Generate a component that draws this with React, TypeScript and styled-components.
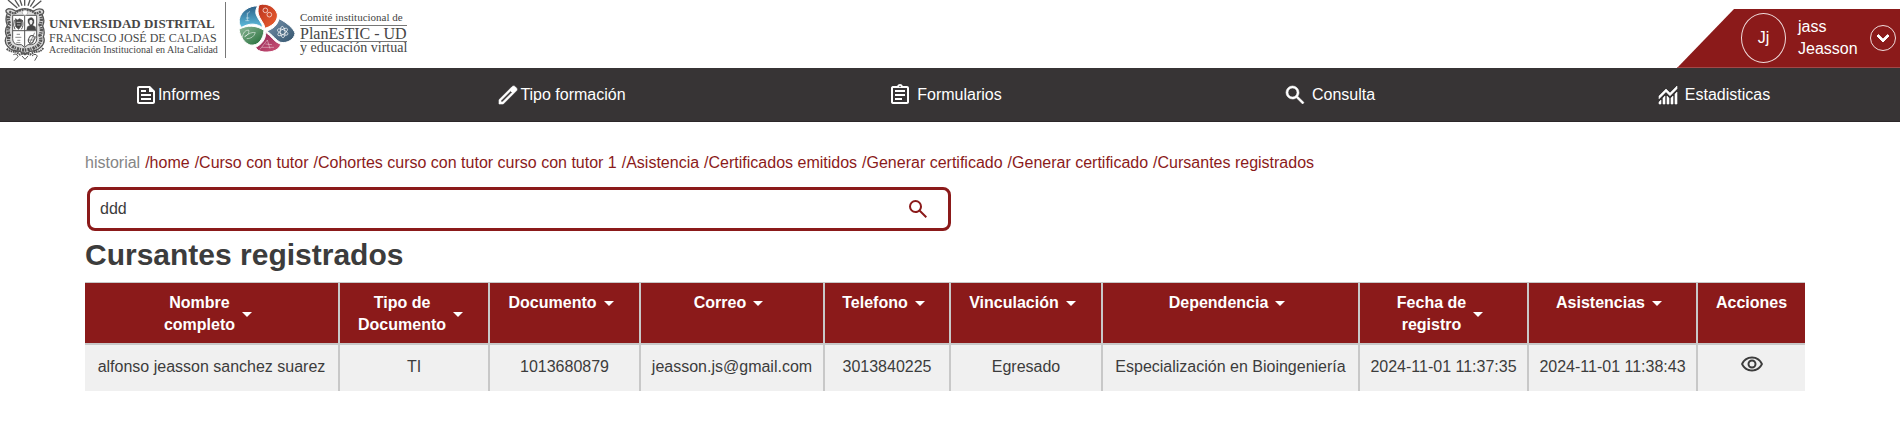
import React from "react";
import styled, { createGlobalStyle } from "styled-components";
import {
  MdArrowDropDown,
  MdKeyboardArrowDown,
  MdOutlineAssignment,
  MdOutlineFeed,
  MdOutlineRemoveRedEye,
} from "react-icons/md";

const red = "#8b1a1a";
const dark = "#373435";
const line = "#c8c8c8";

const GlobalStyle = createGlobalStyle`
  *, *::before, *::after { box-sizing: border-box; }
  body {
    margin: 0;
    background: #fff;
    color: #3c3c3c;
    font: 16px/22px "Liberation Sans", Arial, sans-serif;
  }
  button, input { font: inherit; color: inherit; }
  svg { display: block; flex: none; }
`;

const Header = styled.header`
  display: flex;
  justify-content: space-between;
  align-items: flex-end;
  height: 68px;
`;

const Brand = styled.a`
  display: flex;
  align-items: flex-start;
  align-self: stretch;
  padding-left: 4px;
  color: #464646;
  text-decoration: none;
  font-family: "Liberation Serif", "Times New Roman", serif;
  white-space: nowrap;
`;

const University = styled.span`
  display: flex;
  flex-direction: column;
  width: 176px;
  margin: 16px 0 0 3px;
`;

const BrandLine = styled.span<{ $size: number; $height: number; $bold?: boolean }>`
  font-size: ${(p) => p.$size}px;
  line-height: ${(p) => p.$height}px;
  font-weight: ${(p) => (p.$bold ? 700 : 400)};
`;

const Divider = styled.span`
  width: 1px;
  height: 56px;
  margin: 2px 12px 0 0;
  background: #777;
`;

const Committee = styled.span`
  display: flex;
  flex-direction: column;
  margin: 11px 0 0 4px;
`;

const Plan = styled(BrandLine)`
  border: solid #777;
  border-width: 1px 0;
  margin-top: 1px;
`;

const User = styled.div`
  display: flex;
  align-items: center;
  height: 59px;
  padding: 0 4px 0 64px;
  background: ${red};
  border-bottom: 1px solid #a34848;
  clip-path: polygon(57px 0, 100% 0, 100% 100%, 0 100%);
  color: #fff;
`;

const Avatar = styled.span`
  display: flex;
  align-items: center;
  justify-content: center;
  width: 45px;
  height: 50px;
  border: 1px solid #f0dcdc;
  border-radius: 50%;
`;

const UserName = styled.span`
  width: 72px;
  margin-left: 12px;
`;

const RoundButton = styled.button`
  width: 26px;
  height: 26px;
  padding: 0;
  border: 1px solid #f0dcdc;
  border-radius: 50%;
  background: none;
  color: #fff;
  path:not([fill="none"]) { stroke: currentColor; stroke-width: 1px; }
`;

const Nav = styled.nav`
  display: grid;
  grid-template-columns: repeat(5, 1fr);
  gap: 30px;
  height: 54px;
  padding-right: 10px;
  background: ${dark};
  border-bottom: 1px solid #2b2729;
`;

const NavLink = styled.a<{ $gap: number }>`
  display: flex;
  align-items: center;
  justify-content: center;
  gap: ${(p) => p.$gap}px;
  color: #fff;
  text-decoration: none;
`;

const Main = styled.main`
  padding: 30px 95px 32px 85px;
`;

const Crumbs = styled.nav`
  display: flex;
  flex-wrap: wrap;
  gap: 5px;
  color: #858585;
`;

const Crumb = styled.a`
  color: ${red};
  text-decoration: none;
`;

const Search = styled.form`
  display: flex;
  align-items: center;
  width: calc(50% + 4px);
  height: 44px;
  margin: 13px 0 0 2px;
  padding: 0 18px 0 10px;
  border: 3px solid ${red};
  border-radius: 8px;
`;

const SearchInput = styled.input`
  flex: 1;
  min-width: 0;
  padding: 0;
  border: 0;
  outline: 0;
  background: none;
`;

const IconButton = styled.button`
  display: inline-flex;
  padding: 0;
  border: 0;
  background: none;
  color: inherit;
  vertical-align: top;
`;

const SearchButton = styled(IconButton)`
  color: ${red};
`;

const Title = styled.h1`
  margin: 7px 0 11px;
  font-size: 30px;
  line-height: 33px;
`;

const Table = styled.table`
  width: 100%;
  table-layout: fixed;
  border-collapse: separate;
  border-spacing: 0;
  border-top: 1px solid ${line};
  text-align: center;
`;

const Head = styled.th`
  padding: 9px 0 7px;
  background: ${red};
  color: #fff;
  vertical-align: top;
  border-right: 2px solid ${line};
  border-bottom: 2px solid ${line};
  &:last-child { border-right: 0; }
`;

const SortButton = styled.button`
  display: inline-flex;
  align-items: center;
  padding: 0;
  border: 0;
  background: none;
  vertical-align: top;
  svg { margin: -1px 0; }
`;

const Cell = styled.td`
  height: 46px;
  padding: 11px 0 13px;
  background: #f0f0f0;
  vertical-align: top;
  white-space: nowrap;
  border-right: 2px solid ${line};
  &:last-child { border-right: 0; padding: 7px 0 0; }
`;

const Symbol = ({ d, bold }: { d: string; bold?: boolean }) => (
  <svg width="24" height="24" viewBox="0 -960 960 960" fill="currentColor"
    stroke="currentColor" strokeWidth={bold ? 24 : 0} aria-hidden="true">
    <path d={d} />
  </svg>
);

const searchPath =
  "M784-120 532-372q-30 24-69 38t-83 14q-109 0-184.5-75.5T120-580q0-109 75.5-184.5T380-840q109 0 184.5 75.5T640-580q0 44-14 83t-38 69l252 252-56 56ZM380-400q75 0 127.5-52.5T560-580q0-75-52.5-127.5T380-760q-75 0-127.5 52.5T200-580q0 75 52.5 127.5T380-400Z";
const editPath =
  "M200-200h57l391-391-57-57-391 391v57Zm-80 80v-170l528-527q12-11 26.5-17t30.5-6q16 0 31 6t26 18l55 56q12 11 17.5 26t5.5 30q0 16-5.5 30.5T817-647L290-120H120Zm640-584-56-56 56 56Zm-141 85-28-29 57 57-29-28Z";
const chartPath =
  "M120-120v-80l80-80v160h-80Zm160 0v-240l80-80v320h-80Zm160 0v-320l80 81v239h-80Zm160 0v-239l80-80v319h-80Zm160 0v-400l80-80v480h-80ZM120-327v-113l280-280 160 160 280-280v113L560-447 400-607 120-327Z";

const Crest = () => (
  <svg width="42" height="62" viewBox="12 0 126 186" fill="none" stroke="#555" aria-hidden="true">
    <path d="M52 24 L24 0 M58 20 L45 0 M66 17 L60 0 M74 17 V0 M84 17 L90 0 M91 20 L104 0 M98 24 L124 2" strokeWidth="4" />
    <path d="M22 40 Q12 30 26 26 Q38 26 48 34 Q74 18 100 34 Q112 24 126 28 Q136 34 126 44 Q136 60 128 78 Q136 96 130 110 Q138 126 122 142 Q110 154 90 154 L75 164 L60 154 Q34 154 24 140 Q10 126 20 108 Q12 92 22 76 Q14 58 22 40Z" fill="#ddd" strokeWidth="4" />
    <path d="M30 42 Q20 58 30 72 Q20 90 28 106 Q20 128 38 140 Q56 150 75 150 Q98 148 112 138 Q128 124 120 106 Q128 90 120 74 Q128 58 120 42" strokeWidth="10" strokeDasharray="4 3 7 2" />
    <path d="M28 34 Q44 46 52 34 Q74 24 98 34 Q106 46 122 34" strokeWidth="7" strokeDasharray="6 2" />
    <path d="M20 146 Q34 158 46 154 L60 164 L75 158 L90 164 L106 154 Q120 158 130 144" strokeWidth="6" strokeDasharray="5 2" />
    <path d="M40 164 Q50 158 54 170 L42 182 M96 168 Q106 158 112 168 L104 182 M66 168 L75 178 L84 168" strokeWidth="3" />
    <path d="M38 46 H110 V116 Q110 132 94 134 H84 L74 142 L64 134 H54 Q38 132 38 116Z" fill="#fff" strokeWidth="3" />
    <path d="M74 46V140 M38 92H110" strokeWidth="3" />
    <path d="M43 60 Q38 78 45 88 M67 60 Q72 78 64 88" strokeWidth="3" />
    <path d="M46 56 L53 60 L58 56 L66 60 L64 78 L56 88 L47 80Z" fill="#444" strokeWidth="2" />
    <path d="M50 67h12 M51 75h10" stroke="#eee" strokeWidth="2" />
    <circle cx="75" cy="38" r="8" fill="#fff" stroke="#999" strokeWidth="2" />
    <path d="M84 58 Q96 46 102 60 Q104 70 98 76 L106 80 L108 90 H80 L82 80 L90 76 Q82 70 84 58Z" fill="#444" strokeWidth="1" />
    <path d="M88 62 Q96 56 98 65 Q97 73 92 74 Q88 70 88 62Z" fill="#eee" stroke="none" />
    <path d="M50 103h10 M46 112h18 M52 121h9 M49 128h12" strokeWidth="2" />
    <ellipse cx="94" cy="118" rx="8" ry="12" strokeWidth="3" transform="rotate(20 94 118)" />
    <path d="M83 120 H102 Q108 116 106 108 M88 132 L104 98" strokeWidth="2" />
  </svg>
);

const Petals = () => (
  <svg width="58" height="53" viewBox="72 8 174 159" fill="none" aria-hidden="true">
    <defs>
      <linearGradient id="blue" x1="0" y1="0" x2="0" y2="1">
        <stop offset="0" stopColor="#2c5f86" /><stop offset="1" stopColor="#5fc0e0" />
      </linearGradient>
      <linearGradient id="orange" x1="0" y1="0" x2="1" y2="1">
        <stop offset="0" stopColor="#b8321e" /><stop offset="1" stopColor="#ee6231" />
      </linearGradient>
      <linearGradient id="slate" x1="0" y1="0" x2="1" y2="1">
        <stop offset="0" stopColor="#7792ac" /><stop offset="1" stopColor="#34556e" />
      </linearGradient>
      <linearGradient id="pink" x1="0" y1="0" x2="1" y2="1">
        <stop offset="0" stopColor="#8c2452" /><stop offset="1" stopColor="#cf5378" />
      </linearGradient>
      <linearGradient id="green" x1="0" y1="0" x2="1" y2="1">
        <stop offset="0" stopColor="#8fb899" /><stop offset="1" stopColor="#1f6b35" />
      </linearGradient>
    </defs>
    <g stroke="#fff" strokeWidth="3">
      <path d="M131 26C107 24 80 42 76 66C75 80 79 86 83 90C106 76 130 78 147 92C145 77 131 66 126 50C124 40 127 33 131 26Z" fill="url(#blue)" />
      <path d="M136 22C160 16 183 29 190 50C192 66 182 84 153 93C151 77 137 66 133 50C131 38 132 30 136 22Z" fill="url(#orange)" />
      <path d="M195 64C216 74 240 94 243 108C241 126 220 139 200 135C188 131 176 113 158 101C178 94 190 84 195 64Z" fill="url(#slate)" />
      <path d="M155 105C173 116 180 134 200 141C196 157 176 166 150 164C136 162 128 158 125 150C145 140 156 124 155 105Z" fill="url(#pink)" />
      <path d="M150 99C148 124 134 147 108 143C92 137 79 120 75 96C99 82 128 84 150 99Z" fill="url(#green)" />
    </g>
    <g stroke="#fff" strokeWidth="2">
      <circle cx="154" cy="39" r="7" /><circle cx="166" cy="52" r="7" />
      <path d="M100 46V70 M94 70H106 M108 42L101 49 M96 62H106" strokeOpacity=".7" />
      <ellipse cx="206" cy="104" rx="17" ry="7" transform="rotate(25 206 104)" />
      <ellipse cx="206" cy="104" rx="17" ry="7" transform="rotate(85 206 104)" />
      <ellipse cx="206" cy="104" rx="17" ry="7" transform="rotate(145 206 104)" />
      <path d="M84 122Q88 98 104 98Q108 110 92 118Q112 102 124 106Q118 124 98 124" strokeOpacity=".8" />
      <path d="M138 156L160 128L168 154M144 150H180M154 140L174 142" strokeOpacity=".6" />
    </g>
  </svg>
);

const navItems = [
  { label: "Informes", gap: 0, icon: <MdOutlineFeed size={24} /> },
  { label: "Tipo formación", gap: 0, icon: <Symbol d={editPath} bold /> },
  { label: "Formularios", gap: 5, icon: <MdOutlineAssignment size={24} /> },
  { label: "Consulta", gap: 5, icon: <Symbol d={searchPath} bold /> },
  { label: "Estadisticas", gap: 5, icon: <Symbol d={chartPath} bold /> },
];

const crumbs = [
  "home",
  "Curso con tutor",
  "Cohortes curso con tutor curso con tutor 1",
  "Asistencia",
  "Certificados emitidos",
  "Generar certificado",
  "Generar certificado",
  "Cursantes registrados",
];

const columns = [
  { lines: ["Nombre", "completo"], width: 255 },
  { lines: ["Tipo de", "Documento"], width: 150 },
  { lines: ["Documento"], width: 151 },
  { lines: ["Correo"], width: 184 },
  { lines: ["Telefono"], width: 126 },
  { lines: ["Vinculación"], width: 152 },
  { lines: ["Dependencia"], width: 257 },
  { lines: ["Fecha de", "registro"], width: 169 },
  { lines: ["Asistencias"], width: 169 },
];

const rows = [
  [
    "alfonso jeasson sanchez suarez",
    "TI",
    "1013680879",
    "jeasson.js@gmail.com",
    "3013840225",
    "Egresado",
    "Especialización en Bioingeniería",
    "2024-11-01 11:37:35",
    "2024-11-01 11:38:43",
  ],
];

export default function App() {
  return (
    <>
      <GlobalStyle />
      <Header>
        <Brand href="#inicio">
          <Crest />
          <University>
            <BrandLine $size={13} $height={15} $bold>UNIVERSIDAD DISTRITAL</BrandLine>
            <BrandLine $size={12} $height={14}>FRANCISCO JOSÉ DE CALDAS</BrandLine>
            <BrandLine $size={10} $height={10}>Acreditación Institucional en Alta Calidad</BrandLine>
          </University>
          <Divider />
          <Petals />
          <Committee>
            <BrandLine $size={11} $height={13}>Comité institucional de</BrandLine>
            <Plan $size={16} $height={15}>PlanEsTIC - UD</Plan>
            <BrandLine $size={14} $height={12}>y educación virtual</BrandLine>
          </Committee>
        </Brand>
        <User>
          <Avatar>Jj</Avatar>
          <UserName>jass<br />Jeasson</UserName>
          <RoundButton type="button" aria-label="Menú de usuario">
            <MdKeyboardArrowDown size={24} />
          </RoundButton>
        </User>
      </Header>
      <Nav>
        {navItems.map((item) => (
          <NavLink key={item.label} href="#menu" $gap={item.gap}>
            {item.icon}
            {item.label}
          </NavLink>
        ))}
      </Nav>
      <Main>
        <Crumbs aria-label="historial">
          <span>historial</span>
          {crumbs.map((crumb, i) => (
            <Crumb key={i} href="#historial">/{crumb}</Crumb>
          ))}
        </Crumbs>
        <Search role="search" onSubmit={(e) => e.preventDefault()}>
          <SearchInput type="text" aria-label="Buscar" defaultValue="ddd" />
          <SearchButton type="submit" aria-label="Buscar">
            <Symbol d={searchPath} />
          </SearchButton>
        </Search>
        <Title>Cursantes registrados</Title>
        <Table>
          <colgroup>
            {columns.map((c, i) => <col key={i} width={c.width} />)}
            <col width={107} />
          </colgroup>
          <thead>
            <tr>
              {columns.map((c, i) => (
                <Head key={i} scope="col">
                  <SortButton type="button">
                    <strong>{c.lines[0]}{c.lines[1] && <><br />{c.lines[1]}</>}</strong>
                    <MdArrowDropDown size={24} />
                  </SortButton>
                </Head>
              ))}
              <Head scope="col">Acciones</Head>
            </tr>
          </thead>
          <tbody>
            {rows.map((row, r) => (
              <tr key={r}>
                {row.map((value, i) => <Cell key={i}>{value}</Cell>)}
                <Cell>
                  <IconButton type="button" aria-label="Ver">
                    <MdOutlineRemoveRedEye size={24} />
                  </IconButton>
                </Cell>
              </tr>
            ))}
          </tbody>
        </Table>
      </Main>
    </>
  );
}
